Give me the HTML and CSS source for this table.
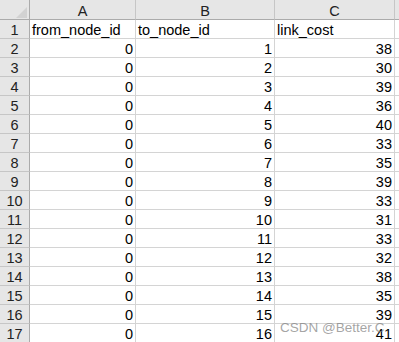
FILE: index.html
```html
<!DOCTYPE html>
<html>
<head>
<meta charset="utf-8">
<link rel="stylesheet" href="styles.css">
</head>
<body>
<div class="sheet">
  <div class="grid">
    <div class="corner"><svg class="tri" width="11" height="11" viewBox="0 0 11 11"><polygon points="0,11 11,0 11,11" fill="#d2d2d2"/></svg></div>
    <div class="colhead">A</div>
    <div class="colhead">B</div>
    <div class="colhead">C</div>
    <div class="colhead last"></div>

    <div class="rowhead">1</div><div class="cell">from_node_id</div><div class="cell">to_node_id</div><div class="cell">link_cost</div><div class="cell last"></div>
    <div class="rowhead">2</div><div class="cell num">0</div><div class="cell num">1</div><div class="cell num">38</div><div class="cell last"></div>
    <div class="rowhead">3</div><div class="cell num">0</div><div class="cell num">2</div><div class="cell num">30</div><div class="cell last"></div>
    <div class="rowhead">4</div><div class="cell num">0</div><div class="cell num">3</div><div class="cell num">39</div><div class="cell last"></div>
    <div class="rowhead">5</div><div class="cell num">0</div><div class="cell num">4</div><div class="cell num">36</div><div class="cell last"></div>
    <div class="rowhead">6</div><div class="cell num">0</div><div class="cell num">5</div><div class="cell num">40</div><div class="cell last"></div>
    <div class="rowhead">7</div><div class="cell num">0</div><div class="cell num">6</div><div class="cell num">33</div><div class="cell last"></div>
    <div class="rowhead">8</div><div class="cell num">0</div><div class="cell num">7</div><div class="cell num">35</div><div class="cell last"></div>
    <div class="rowhead">9</div><div class="cell num">0</div><div class="cell num">8</div><div class="cell num">39</div><div class="cell last"></div>
    <div class="rowhead">10</div><div class="cell num">0</div><div class="cell num">9</div><div class="cell num">33</div><div class="cell last"></div>
    <div class="rowhead">11</div><div class="cell num">0</div><div class="cell num">10</div><div class="cell num">31</div><div class="cell last"></div>
    <div class="rowhead">12</div><div class="cell num">0</div><div class="cell num">11</div><div class="cell num">33</div><div class="cell last"></div>
    <div class="rowhead">13</div><div class="cell num">0</div><div class="cell num">12</div><div class="cell num">32</div><div class="cell last"></div>
    <div class="rowhead">14</div><div class="cell num">0</div><div class="cell num">13</div><div class="cell num">38</div><div class="cell last"></div>
    <div class="rowhead">15</div><div class="cell num">0</div><div class="cell num">14</div><div class="cell num">35</div><div class="cell last"></div>
    <div class="rowhead">16</div><div class="cell num">0</div><div class="cell num">15</div><div class="cell num">39</div><div class="cell last"></div>
    <div class="rowhead">17</div><div class="cell num">0</div><div class="cell num">16</div><div class="cell num">41</div><div class="cell last"></div>
  </div>
  <div class="watermark">CSDN @Better.C</div>
</div>
</body>
</html>
```

FILE: styles.css
```css
html, body {
  margin: 0;
  padding: 0;
  background: #ffffff;
  overflow: hidden;
}

.sheet {
  position: relative;
  width: 399px;
  height: 342px;
  overflow: hidden;
  font-family: "Liberation Sans", Arial, sans-serif;
  font-size: 14.5px;
  color: #000;
}

.grid {
  display: grid;
  grid-template-columns: 30px 106px 139px 120px 20px;
  grid-template-rows: 20px;
  grid-auto-rows: 19px;
}

.grid > div {
  box-sizing: border-box;
  display: flex;
  align-items: flex-end;
  line-height: 14px;
  padding-bottom: 1px;
  white-space: nowrap;
  overflow: hidden;
}

.corner {
  background: #e6e6e6;
  border-right: 1px solid #ababab;
  border-bottom: 1px solid #ababab;
  justify-content: flex-end;
  align-items: flex-end;
  padding: 0 2px 2px 0;
}

.tri {
  display: block;
}

.colhead {
  background: #e6e6e6;
  border-right: 1px solid #c6c6c6;
  border-bottom: 1px solid #ababab;
  justify-content: center;
  color: #222;
}

.rowhead {
  background: #e6e6e6;
  border-right: 1px solid #ababab;
  border-bottom: 1px solid #c6c6c6;
  justify-content: center;
  color: #222;
}

.cell {
  border-right: 1px solid #d4d4d4;
  border-bottom: 1px solid #d4d4d4;
  padding-left: 2px;
  padding-right: 2px;
}

.cell.num {
  justify-content: flex-end;
}

.watermark {
  position: absolute;
  left: 280px;
  top: 320px;
  font-size: 13.5px;
  line-height: normal;
  color: rgba(125, 125, 125, 0.7);
  white-space: nowrap;
}
```
